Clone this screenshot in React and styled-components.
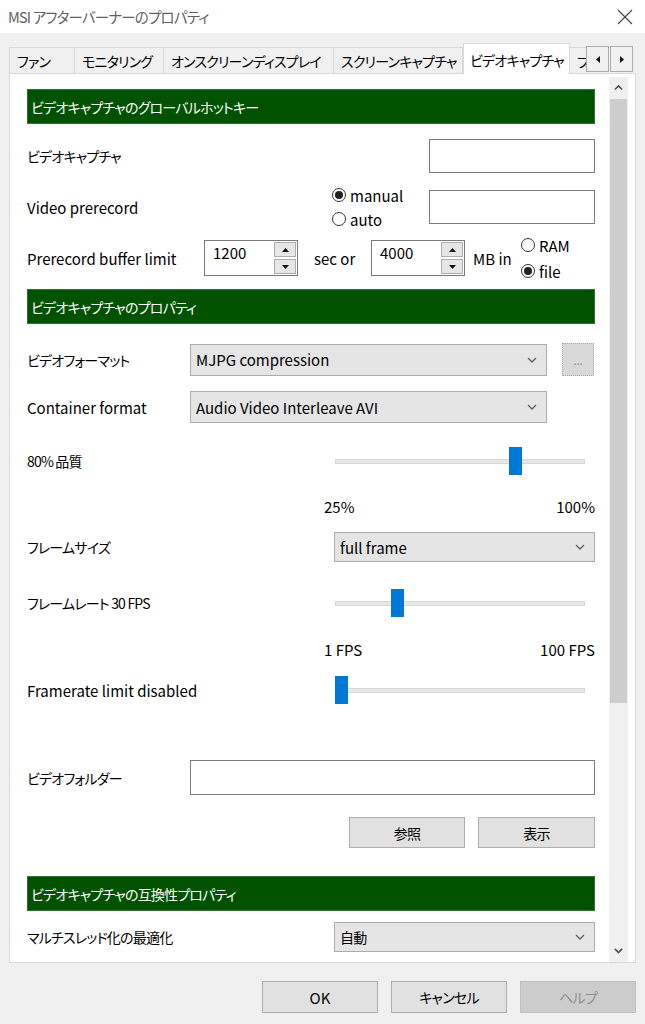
import React from 'react';
import styled, { createGlobalStyle, css } from 'styled-components';

const GlobalStyle = createGlobalStyle`
  html, body {
    margin: 0;
    padding: 0;
    background: #f0f0f0;
  }
  body {
    font-family: "Noto Sans CJK JP", "Noto Sans", sans-serif;
    font-feature-settings: "palt" 1;
    color: #000;
  }
  * { box-sizing: border-box; }
`;

// the kana in the original UI font run narrower than Noto's
const jpText = css`
  font-size: 14px;
  letter-spacing: -0.8px;
`;

const Window = styled.div`
  width: 645px;
  height: 1024px;
  background: #f0f0f0;
  display: flex;
  flex-direction: column;
  overflow: hidden;
`;

const TitleBar = styled.div`
  height: 33px;
  background: #fff;
  display: flex;
  align-items: center;
  justify-content: space-between;
  padding: 0 12px 0 8px;
`;

const Title = styled.span`
  ${jpText}
  font-size: 14.5px;
  color: #5f5f5f;
`;

const Body = styled.div`
  flex: 1;
  display: flex;
  flex-direction: column;
  padding: 10px 9px 0 9px;
`;

const TabStrip = styled.div`
  display: flex;
  align-items: flex-end;
  height: 31px;
`;

const TabList = styled.div`
  display: flex;
  align-items: flex-end;
  width: 577px;
  height: 31px;
  overflow: hidden;
`;

const Tab = styled.div`
  ${jpText}
  flex: 0 0 ${p => p.$w}px;
  height: ${p => (p.$active ? 31 : 27)}px;
  background: ${p => (p.$active ? '#fff' : '#f0f0f0')};
  border: 1px solid #d9d9d9;
  border-bottom: none;
  border-left: ${p => (p.$first || p.$active ? '1px solid #d9d9d9' : 'none')};
  padding: ${p => (p.$active ? '2px 0 0 6px' : '0 0 0 7px')};
  display: flex;
  align-items: center;
  white-space: nowrap;
  overflow: hidden;
  position: relative;
  z-index: ${p => (p.$active ? 2 : 0)};
`;

const TabArrows = styled.div`
  display: flex;
  align-self: flex-start;
  margin-top: 3px;
  gap: 1px;
`;

const TabArrow = styled.div`
  width: 23px;
  height: 26px;
  background: #f0f0f0;
  border: 1px solid #adadad;
  display: flex;
  align-items: center;
  justify-content: center;
`;

const Panel = styled.div`
  margin-top: -1px;
  position: relative;
  z-index: 1;
  height: 890px;
  background: #fff;
  border: 1px solid #d9d9d9;
  display: flex;
`;

const Content = styled.div`
  flex: 1;
  padding: 15px 14px 0 17px;
  overflow: hidden;
  font-size: 15px;
`;

const ScrollBar = styled.div`
  width: 19px;
  margin: 3px 7px 0 0;
  background: #f0f0f0;
  display: flex;
  flex-direction: column;
`;

const ScrollArrow = styled.div`
  height: 22px;
  display: flex;
  align-items: center;
  justify-content: center;
`;

const ScrollThumb = styled.div`
  height: 604px;
  margin: 0 1px;
  background: #cdcdcd;
`;

const ScrollTrack = styled.div`
  flex: 1;
`;

const SectionHeader = styled.div`
  ${jpText}
  height: 35px;
  background: #005200;
  border: 1px solid #2f6f2f;
  color: #fff;
  padding-left: 3px;
  display: flex;
  align-items: center;
  margin-top: ${p => p.$mt || 0}px;
  white-space: nowrap;
`;

const Row = styled.div`
  display: flex;
  align-items: center;
  height: ${p => p.$h}px;
  margin-top: ${p => p.$mt}px;
`;

const Label = styled.div`
  flex: ${p => (p.$w ? `0 0 ${p.$w}px` : '1')};
  white-space: nowrap;
  ${p => p.$jp && jpText}
`;

const TextBox = styled.div`
  flex: ${p => (p.$w ? `0 0 ${p.$w}px` : '1')};
  height: ${p => p.$h}px;
  background: #fff;
  border: 1px solid #7a7a7a;
`;

const SelectBox = styled.div`
  flex: 0 0 ${p => p.$w}px;
  height: ${p => p.$h}px;
  background: #e5e5e5;
  border: 1px solid #adadad;
  display: flex;
  align-items: center;
  justify-content: space-between;
  padding: 0 9px 0 5px;
  white-space: nowrap;
  ${p => p.$jp && jpText}
`;

const DotsButton = styled.div`
  flex: 0 0 32px;
  height: 33px;
  margin-left: 15px;
  background: #d9d9d9;
  border: 1px dotted #a8a8a8;
  color: #7a7a7a;
  font-size: 11px;
  display: flex;
  align-items: flex-end;
  justify-content: center;
  padding-bottom: 7px;
`;

const RadioGroup = styled.div`
  flex: 0 0 ${p => p.$w}px;
  display: flex;
  flex-direction: column;
  gap: ${p => p.$gap}px;
`;

const RadioItem = styled.div`
  display: flex;
  align-items: center;
  gap: 4px;
  line-height: 1;
  height: 16px;
`;

const RadioCircle = styled.span`
  width: 14px;
  height: 14px;
  border-radius: 50%;
  border: 1px solid #333;
  background: #fff;
  display: flex;
  align-items: center;
  justify-content: center;
  &::after {
    content: '';
    width: 8px;
    height: 8px;
    border-radius: 50%;
    background: ${p => (p.$on ? '#222' : 'transparent')};
  }
`;

const SpinBox = styled.div`
  flex: 0 0 94px;
  height: 36px;
  background: #fff;
  border: 1px solid #7a7a7a;
  display: flex;
  padding: 1px;
`;

const SpinValue = styled.div`
  flex: 1;
  padding: 2px 0 0 7px;
  line-height: 1.2;
`;

const SpinButtons = styled.div`
  flex: 0 0 22px;
  display: flex;
  flex-direction: column;
  gap: 2px;
`;

const SpinButton = styled.div`
  flex: 1;
  background: #e6e6e6;
  border: 1px solid #adadad;
  display: flex;
  align-items: center;
  justify-content: center;
`;

const InlineText = styled.div`
  flex: 0 0 ${p => p.$w}px;
  padding-left: ${p => p.$pl}px;
  white-space: nowrap;
`;

const SliderBox = styled.div`
  flex: 0 0 261px;
  height: 28px;
  position: relative;
`;

const SliderTrack = styled.div`
  position: absolute;
  left: 1px;
  right: 10px;
  top: 12px;
  height: 5px;
  background: #e7e7e7;
  border: 1px solid #d6d6d6;
`;

const SliderThumb = styled.div`
  position: absolute;
  top: 0;
  width: 13px;
  height: 28px;
  background: #0078d7;
`;

const ScaleBox = styled.div`
  margin-left: auto;
  width: 271px;
  display: flex;
  justify-content: space-between;
  white-space: nowrap;
`;

const ButtonRow = styled.div`
  display: flex;
  justify-content: flex-end;
  gap: ${p => p.$gap}px;
  height: ${p => p.$h}px;
  margin-top: ${p => p.$mt}px;
`;

const PushButton = styled.div`
  width: ${p => p.$w}px;
  height: 100%;
  background: ${p => (p.$disabled ? '#cccccc' : '#e1e1e1')};
  border: 1px solid ${p => (p.$disabled ? '#bfbfbf' : '#adadad')};
  color: ${p => (p.$disabled ? '#8f8f8f' : '#000')};
  font-size: 15px;
  display: flex;
  align-items: center;
  justify-content: center;
  ${p => p.$jp && jpText}
`;

const Footer = styled(ButtonRow)`
  margin-top: 18px;
`;

const Chevron = ({ up, color = '#606060', w = 10, sw = 1.3 }) => (
  <svg width={w} height={w * 0.6} viewBox="0 0 10 6">
    <polyline
      points={up ? '1,5 5,1 9,5' : '1,1 5,5 9,1'}
      fill="none"
      stroke={color}
      strokeWidth={sw}
    />
  </svg>
);

const Tri = ({ dir }) => {
  const pts = {
    up: '0,4 3.5,0 7,4',
    down: '0,0 3.5,4 7,0',
    left: '4,0 0,3.5 4,7',
    right: '0,0 4,3.5 0,7',
  }[dir];
  const vertical = dir === 'up' || dir === 'down';
  return (
    <svg width={vertical ? 7 : 4} height={vertical ? 4 : 7} viewBox={vertical ? '0 0 7 4' : '0 0 4 7'}>
      <polygon points={pts} fill="#111" />
    </svg>
  );
};

const Select = ({ w, h, jp, children }) => (
  <SelectBox $w={w} $h={h} $jp={jp}>
    <span>{children}</span>
    <Chevron />
  </SelectBox>
);

const Radio = ({ on, children }) => (
  <RadioItem>
    <RadioCircle $on={on} />
    <span>{children}</span>
  </RadioItem>
);

const Spin = ({ value }) => (
  <SpinBox>
    <SpinValue>{value}</SpinValue>
    <SpinButtons>
      <SpinButton><Tri dir="up" /></SpinButton>
      <SpinButton><Tri dir="down" /></SpinButton>
    </SpinButtons>
  </SpinBox>
);

const Slider = ({ pos }) => (
  <SliderBox>
    <SliderTrack />
    <SliderThumb style={{ left: `${1 + pos * 237}px` }} />
  </SliderBox>
);

const tabs = [
  { name: 'ファン', w: 66 },
  { name: 'モニタリング', w: 89 },
  { name: 'オンスクリーンディスプレイ', w: 170 },
  { name: 'スクリーンキャプチャ', w: 129 },
  { name: 'ビデオキャプチャ', w: 107, active: true },
  { name: 'プロファイル', w: 40 },
];

const App = () => {
  return (
    <>
      <GlobalStyle />
      <Window>
        <TitleBar>
          <Title>MSI アフターバーナーのプロパティ</Title>
          <svg width="16" height="16" viewBox="0 0 16 16">
            <line x1="1" y1="1" x2="15" y2="15" stroke="#444" strokeWidth="1.1" />
            <line x1="15" y1="1" x2="1" y2="15" stroke="#444" strokeWidth="1.1" />
          </svg>
        </TitleBar>
        <Body>
          <TabStrip>
            <TabList>
              {tabs.map((t, i) => (
                <Tab key={t.name} $w={t.w} $active={t.active} $first={i === 0}>
                  {t.name}
                </Tab>
              ))}
            </TabList>
            <TabArrows>
              <TabArrow><Tri dir="left" /></TabArrow>
              <TabArrow><Tri dir="right" /></TabArrow>
            </TabArrows>
          </TabStrip>

          <Panel>
            <Content>
              <SectionHeader>ビデオキャプチャのグローバルホットキー</SectionHeader>

              <Row $mt={15} $h={34}>
                <Label $jp>ビデオキャプチャ</Label>
                <TextBox $w={166} $h={34} />
              </Row>

              <Row $mt={11} $h={46}>
                <Label>Video prerecord</Label>
                <RadioGroup $w={97} $gap={8}>
                  <Radio on>manual</Radio>
                  <Radio>auto</Radio>
                </RadioGroup>
                <TextBox $w={166} $h={34} />
              </Row>

              <Row $mt={6} $h={44}>
                <Label $w={177}>Prerecord buffer limit</Label>
                <Spin value="1200" />
                <InlineText $w={73} $pl={16}>sec or</InlineText>
                <Spin value="4000" />
                <InlineText $w={56} $pl={8}>MB in</InlineText>
                <RadioGroup $w={70} $gap={10}>
                  <Radio>RAM</Radio>
                  <Radio on>file</Radio>
                </RadioGroup>
              </Row>

              <SectionHeader $mt={9}>ビデオキャプチャのプロパティ</SectionHeader>

              <Row $mt={19} $h={33}>
                <Label $w={163} $jp>ビデオフォーマット</Label>
                <Select w={357} h={32}>MJPG compression</Select>
                <DotsButton>...</DotsButton>
              </Row>

              <Row $mt={15} $h={32}>
                <Label $w={163}>Container format</Label>
                <Select w={357} h={32}>Audio Video Interleave AVI</Select>
              </Row>

              <Row $mt={24} $h={28}>
                <Label $jp>80% 品質</Label>
                <Slider pos={(80 - 25) / 75} />
              </Row>

              <Row $mt={22} $h={18}>
                <ScaleBox>
                  <span>25%</span>
                  <span>100%</span>
                </ScaleBox>
              </Row>

              <Row $mt={17} $h={30}>
                <Label $jp>フレームサイズ</Label>
                <Select w={261} h={30}>full frame</Select>
              </Row>

              <Row $mt={26} $h={29}>
                <Label $jp>フレームレート 30 FPS</Label>
                <Slider pos={0.236} />
              </Row>

              <Row $mt={23} $h={18}>
                <ScaleBox>
                  <span>1 FPS</span>
                  <span>100 FPS</span>
                </ScaleBox>
              </Row>

              <Row $mt={18} $h={28}>
                <Label>Framerate limit disabled</Label>
                <Slider pos={0} />
              </Row>

              <Row $mt={56} $h={35}>
                <Label $w={163} $jp>ビデオフォルダー</Label>
                <TextBox $h={35} />
              </Row>

              <ButtonRow $mt={22} $h={31} $gap={13}>
                <PushButton $w={116} $jp>参照</PushButton>
                <PushButton $w={117} $jp>表示</PushButton>
              </ButtonRow>

              <SectionHeader $mt={28}>ビデオキャプチャの互換性プロパティ</SectionHeader>

              <Row $mt={11} $h={30}>
                <Label $jp>マルチスレッド化の最適化</Label>
                <Select w={261} h={30} jp>自動</Select>
              </Row>
            </Content>

            <ScrollBar>
              <ScrollArrow><Chevron up color="#505050" w={9} sw={1.8} /></ScrollArrow>
              <ScrollThumb />
              <ScrollTrack />
              <ScrollArrow><Chevron color="#505050" w={9} sw={1.8} /></ScrollArrow>
            </ScrollBar>
          </Panel>

          <Footer $h={32} $gap={13}>
            <PushButton $w={116}>OK</PushButton>
            <PushButton $w={116} $jp>キャンセル</PushButton>
            <PushButton $w={116} $disabled $jp>ヘルプ</PushButton>
          </Footer>
        </Body>
      </Window>
    </>
  );
};

export default App;
